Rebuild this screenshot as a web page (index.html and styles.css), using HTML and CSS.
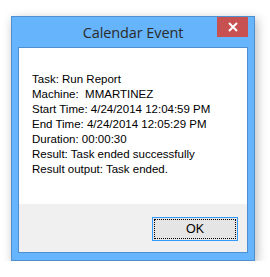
FILE: index.html
```html
<!DOCTYPE html>
<html>
<head>
<meta charset="UTF-8">
<title>Calendar Event</title>
<link rel="stylesheet" href="styles.css">
</head>
<body>
<div class="window">
  <div class="titlebar">
    <span class="title">Calendar Event</span>
    <a class="close" href="#close">
      <svg width="10" height="10" viewBox="0 0 10 10"><path d="M1 1 L9 9 M9 1 L1 9" stroke="#fff" stroke-width="2"/></svg>
    </a>
  </div>
  <div class="client">
    <div class="message">
      <div>Task: Run Report</div>
      <div>Machine:&nbsp; MMARTINEZ</div>
      <div>Start Time: 4/24/2014 12:04:59 PM</div>
      <div>End Time: 4/24/2014 12:05:29 PM</div>
      <div>Duration: 00:00:30</div>
      <div>Result: Task ended successfully</div>
      <div>Result output: Task ended.</div>
    </div>
    <div class="footer">
      <button class="ok"><span>OK</span></button>
    </div>
  </div>
</div>
</body>
</html>
```

FILE: styles.css
```css
html {

	font-family: "Liberation Sans", Arial, sans-serif;
	color: #000;
	font-size: 11.5px;
}
body {

	margin: 0;
	padding: 16px 0 0 11px;
	background: #fff;
}
.window {

	width: 230px;
	padding: 0 6px 7px;
	background: #66b4fb;
	border: 1px solid #4f8fcf;
	box-shadow: 2px 3px 10px rgba(0, 0, 0, .28);
}
.titlebar {

	position: relative;
	height: 30px;
	text-align: center;
}
.title {

	display: inline-block;
	padding-top: 6px;
	font-family: "Open Sans", sans-serif;
	font-size: 14.5px;
	color: #2b2b2b;
	letter-spacing: -.1px;
}
.close {

	position: absolute;
	top: 0;
	right: 0;
	width: 31px;
	height: 20px;
	background: #c75050;
	display: flex;
	align-items: center;
	justify-content: center;
}
.client {

	border: 1px solid #4f8fcf;
	background: #fff;
}
.message {

	height: 132px;
	padding: 24px 0 0 13px;
	line-height: 15px;
}
.footer {

	height: 48px;
	background: #f0f0f0;
	display: flex;
	justify-content: flex-end;
	align-items: flex-start;
	padding-right: 9px;
}
.ok {

	margin-top: 13px;
	width: 86px;
	height: 24px;
	padding: 1px;
	border: 1px solid #3399ff;
	background: #e5e5e5;
	font-family: "Liberation Sans", Arial, sans-serif;
	font-size: 12.5px;
	color: #000;
}
.ok span {

	display: block;
	height: 18px;
	line-height: 18px;
	border: 1px dotted #000;
}
```
